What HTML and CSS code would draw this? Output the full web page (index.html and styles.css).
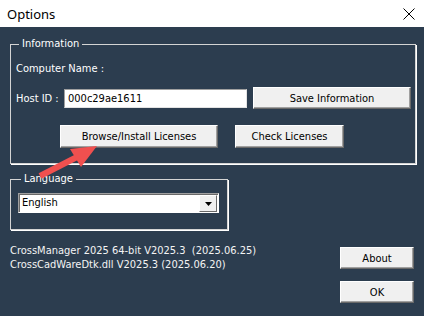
FILE: index.html
```html
<!DOCTYPE html>
<html lang="en">
<head>
  <meta charset="UTF-8" />
  <title>Options</title>
  <link rel="stylesheet" href="styles.css">
</head>
<body>
  <div class="window">
    <div class="titlebar">
      <span class="title">Options</span>
      <svg class="close" width="12" height="12" viewBox="0 0 12 12">
        <path d="M0.5 0.5 L11.5 11.5 M11.5 0.5 L0.5 11.5" stroke="#000" stroke-width="1" fill="none" />
      </svg>
    </div>

    <div class="client">
      <fieldset class="group info">
        <legend>Information</legend>
        <div class="line">Computer Name :</div>
        <div class="host-row">
          <span class="host-label">Host ID :</span>
          <input type="text" class="field" value="000c29ae1611" />
          <button class="btn save-btn">Save Information</button>
        </div>
        <div class="action-row">
          <button class="btn browse-btn">Browse/Install Licenses</button>
          <button class="btn check-btn">Check Licenses</button>
        </div>
      </fieldset>

      <fieldset class="group lang">
        <legend>Language</legend>
        <div class="combo">
          <span class="combo-text">English</span>
          <span class="combo-arrow">
            <svg width="7" height="4" viewBox="0 0 7 4"><path d="M0 0 H7 L3.5 4 Z" fill="#000" /></svg>
          </span>
        </div>
      </fieldset>

      <div class="footer">
        <div class="versions">
          <div>CrossManager 2025 64-bit V2025.3&nbsp; (2025.06.25)</div>
          <div>CrossCadWareDtk.dll V2025.3 (2025.06.20)</div>
        </div>
        <div class="footer-buttons">
          <button class="btn side-btn">About</button>
          <button class="btn side-btn">OK</button>
        </div>
      </div>
    </div>

    <!-- red pointer drawn over the dialog -->
    <svg class="pointer" width="424" height="316" viewBox="0 0 424 316">
      <path d="M40 176 L77 157" stroke="#f0504f" stroke-width="6" stroke-linecap="butt" />
      <polygon points="97,146 70,149 81,167" fill="#f0504f" />
    </svg>
  </div>
</body>
</html>
```

FILE: styles.css
```css
* {
  margin: 0;
  padding: 0;
  box-sizing: border-box;
}

body {
  width: 424px;
  height: 316px;
  overflow: hidden;
  font-family: 'DejaVu Sans Condensed', 'DejaVu Sans', sans-serif;
  font-size: 11px;
}

.window {
  position: relative;
  width: 424px;
  height: 316px;
  background: #2c3d4f;
}

.titlebar {
  height: 27px;
  background: #fff;
  display: flex;
  align-items: center;
  justify-content: space-between;
  padding: 0 9px 0 7px;
}

.title {
  font-family: 'Noto Sans', sans-serif;
  font-size: 13px;
  color: #000;
}

.close {
  display: block;
}

.client {
  padding: 10px 9px 0 10px;
  color: #fff;
}

.group {
  border: 1px solid #d4d4d4;
  box-shadow: 1px 1px 0 #fff;
}

.group legend {
  margin-left: 3px;
  padding: 0 3px 0 3px;
  line-height: 14px;
  color: #fff;
}

.info {
  padding: 0 4px 15px 5px;
}

.line {
  margin-top: 11px;
  line-height: 14px;
}

.host-row {
  margin-top: 11px;
  height: 22px;
  display: flex;
  align-items: center;
}

.host-label {
  width: 48px;
}

.field {
  width: 183px;
  height: 19px;
  font: inherit;
  color: #000;
  padding: 0 3px;
  background: #fff;
  border: 1px solid;
  border-color: #a0a0a0 #e3e3e3 #e3e3e3 #a0a0a0;
}

.btn {
  font: inherit;
  color: #000;
  background: #f0f0f0;
  border: 1px solid;
  border-color: #fff #696969 #696969 #fff;
  box-shadow: inset -1px -1px 0 #a0a0a0;
}

.save-btn {
  margin-left: 6px;
  width: 158px;
  height: 22px;
}

.action-row {
  margin-top: 16px;
  display: flex;
  padding-left: 44px;
  gap: 17px;
}

.browse-btn {
  width: 158px;
  height: 23px;
}

.check-btn {
  width: 109px;
  height: 23px;
}

.lang {
  margin-top: 8px;
  width: 218px;
  padding: 7px 8px 16px 7px;
}

.combo {
  height: 20px;
  display: flex;
  align-items: stretch;
  background: #fff;
  border: 1px solid;
  border-color: #a0a0a0 #fff #fff #a0a0a0;
  box-shadow: inset 1px 1px 0 #696969;
}

.combo-text {
  flex: 1;
  color: #000;
  padding-left: 3px;
  line-height: 18px;
}

.combo-arrow {
  width: 18px;
  margin: 1px 1px 0 0;
  background: #f0f0f0;
  border: 1px solid;
  border-color: #fff #696969 #696969 #fff;
  display: flex;
  align-items: center;
  justify-content: center;
}

.combo-arrow svg {
  display: block;
}

.footer {
  display: flex;
  justify-content: space-between;
  padding-right: 1px;
}

.versions {
  margin-top: 14px;
  line-height: 14px;
  color: #f4f4f4;
}

.footer-buttons {
  margin-top: 17px;
  display: flex;
  flex-direction: column;
  gap: 12px;
}

.side-btn {
  width: 74px;
  height: 22px;
}

.pointer {
  position: absolute;
  left: 0;
  top: 0;
  pointer-events: none;
}
```
